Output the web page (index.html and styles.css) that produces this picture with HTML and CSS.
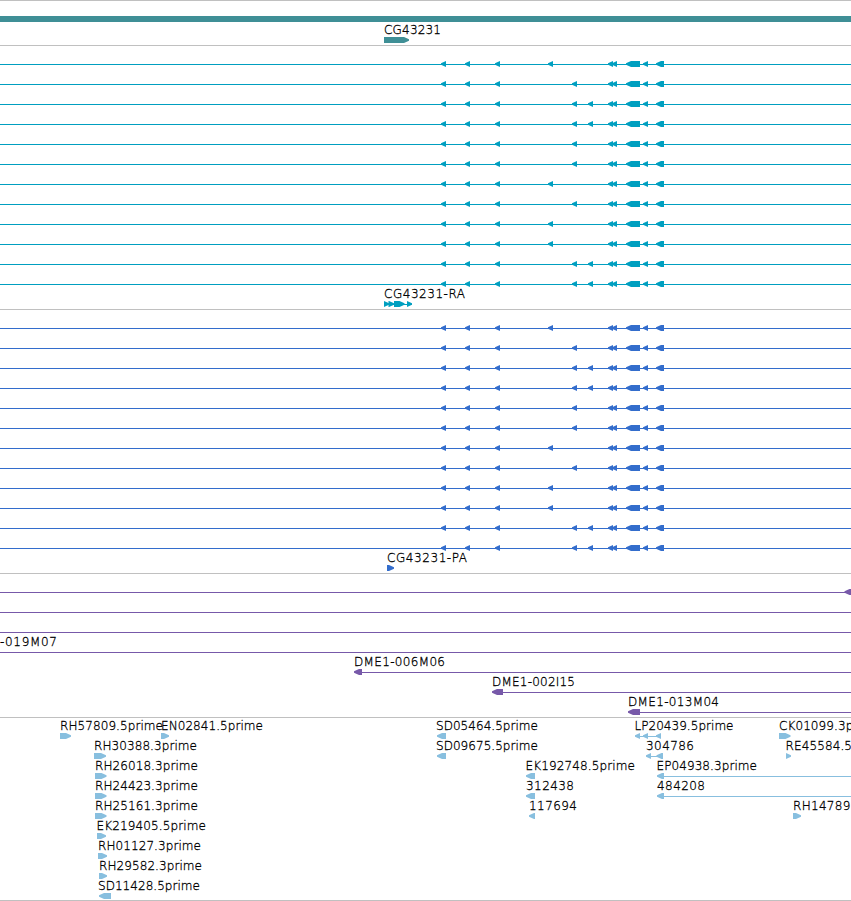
FILE: index.html
```
<!DOCTYPE html>
<html lang="en">
<head>
    <meta charset="UTF-8">
    <meta name="viewport" content="width=device-width, initial-scale=1.0">
    <title>Genome Browser - CG43231</title>
    <link rel="stylesheet" href="styles.css">
</head>
<body>
<main class="browser">
    <section class="track gene" id="gene">
        <div class="span-bar"></div>
    </section>
    <section class="track transcript" id="transcript"></section>
    <section class="track protein" id="protein"></section>
    <section class="track clone" id="clone"></section>
    <section class="track est" id="est"></section>
</main>
<script src="script.js"></script>
</body>
</html>
```
FILE: styles.css
```
* {
    margin: 0;
    padding: 0;
    box-sizing: border-box;
}

body {
    background-color: #fff;
    overflow: hidden;
}

.browser {
    width: 851px;
    overflow: hidden;
    border-bottom: 1px solid #c0c0c0;
}

.track {
    padding: 2px 0 1px;
    border-top: 1px solid #c0c0c0;
}

.gene {
    padding-top: 15px;
    color: #3f8f96;
}

.transcript {
    color: #009fc0;
}

.protein {
    color: #336dcc;
}

.clone {
    color: #7759a9;
}

.est {
    padding-bottom: 0;
    color: #88bfdf;
}

.span-bar {
    height: 6px;
    margin-bottom: 2px;
    background-color: currentColor;
}

.row {
    display: block;
    width: 851px;
    height: 20px;
    overflow: visible;
}

.shape {
    fill: currentColor;
}

.label {
    fill: #000;
    stroke: #000;
    stroke-width: 0.3px;
    font-family: "DejaVu Sans", sans-serif;
    font-size: 12px;
    font-weight: 200;
}
```
FILE: script.js
```
const NS = 'http://www.w3.org/2000/svg';
const WIDTH = 851;

// Exons are [start, end, direction], lines are [start, end], labels are [x, text, width]
const L = -1;
const R = 1;

function add(parent, name, attrs) {
    const el = document.createElementNS(NS, name);
    for (const key in attrs) {
        el.setAttribute(key, attrs[key]);
    }
    parent.appendChild(el);
    return el;
}

// Box with a blunt pointed end, 6px tall
function exonPath(start, end, dir) {
    const tip = Math.min(5, end - start - 0.5);
    if (dir === L) {
        const x = start + 0.5;
        return `M${x} 15.3L${x + tip} 13H${end}V19H${x + tip}L${x} 16.7Z`;
    }
    const x = end - 0.5;
    return `M${x} 15.3L${x - tip} 13H${start}V19H${x - tip}L${x} 16.7Z`;
}

function addRow(trackId, row) {
    const svg = add(document.getElementById(trackId), 'svg', { class: 'row' });
    (row.lines || []).forEach(([start, end]) => {
        add(svg, 'rect', { class: 'shape', x: start, y: 16, width: end - start, height: 1 });
    });
    (row.exons || []).forEach(([start, end, dir]) => {
        add(svg, 'path', { class: 'shape', d: exonPath(start, end, dir) });
    });
    (row.labels || []).forEach(([x, text, width]) => {
        add(svg, 'text', { class: 'label', x: x, y: 10, textLength: width }).textContent = text;
    });
}

// Splice variants: the optional exons in each isoform
const common = [
    [440.5, 446, L], [464.5, 470, L], [494.5, 500, L],
    [607.5, 613, L], [611.5, 617, L], [625.5, 640, L],
    [642.5, 648, L], [655.5, 664, L]
];
const variants = {
    A: [[547.5, 553, L]],
    B: [[571.5, 577, L]],
    C: [[571.5, 577, L], [587.5, 593, L]]
};
const isoforms = 'ABCCBBABAACC'.split('');

addRow('gene', { exons: [[384, 409.5, R]], labels: [[384, 'CG43231', 57]] });

['transcript', 'protein'].forEach(id => {
    isoforms.forEach(key => {
        addRow(id, { lines: [[0, WIDTH]], exons: common.concat(variants[key]) });
    });
});

addRow('transcript', {
    lines: [[384, 412]],
    exons: [[384, 389.5, R], [388.5, 394.5, R], [394, 405, R], [407, 412.5, R]],
    labels: [[384, 'CG43231-RA', 81]]
});
addRow('protein', { exons: [[387, 394.5, R]], labels: [[387, 'CG43231-PA', 80]] });

[
    { lines: [[0, WIDTH]], exons: [[844, 855, L]] },
    { lines: [[0, WIDTH]] },
    { lines: [[0, WIDTH]] },
    { lines: [[0, WIDTH]], labels: [[0, '-019M07', 57]] },
    { lines: [[360, WIDTH]], exons: [[353.5, 362, L]], labels: [[354, 'DME1-006M06', 91]] },
    { lines: [[500, WIDTH]], exons: [[491.5, 503, L]], labels: [[492, 'DME1-002I15', 83]] },
    { lines: [[636, WIDTH]], exons: [[627.5, 640, L]], labels: [[628, 'DME1-013M04', 91]] }
].forEach(row => addRow('clone', row));

[
    {
        lines: [[637, 660]],
        exons: [[60, 71.5, R], [161, 169.5, R], [436.5, 446, L], [634.5, 640, L],
            [642.5, 648, L], [655.5, 661, L], [779, 791, R]],
        labels: [[60, 'RH57809.5prime', 103], [161, 'EN02841.5prime', 102], [436, 'SD05464.5prime', 102],
            [634.5, 'LP20439.5prime', 99], [779, 'CK01099.3prime', 102]]
    },
    {
        lines: [[648, 660]],
        exons: [[94, 106.5, R], [436.5, 446, L], [645.5, 651, L], [656, 663, L], [786, 791.5, R]],
        labels: [[94, 'RH30388.3prime', 103], [436, 'SD09675.5prime', 102], [646, '304786', 48],
            [785.5, 'RE45584.5prime', 102]]
    },
    {
        lines: [[660, WIDTH]],
        exons: [[95, 107, R], [525.5, 535, L], [656.5, 664, L]],
        labels: [[95, 'RH26018.3prime', 103], [525.5, 'EK192748.5prime', 109.5], [656.5, 'EP04938.3prime', 100.5]]
    },
    {
        lines: [[660, WIDTH]],
        exons: [[95, 107, R], [525.5, 535, L], [656.5, 664, L]],
        labels: [[95, 'RH24423.3prime', 103], [526, '312438', 48], [657, '484208', 48]]
    },
    {
        exons: [[95, 107, R], [528.5, 535, L], [793, 801.5, R]],
        labels: [[95, 'RH25161.3prime', 103], [529, '117694', 48], [793, 'RH14789.5prime', 106]]
    },
    { exons: [[97, 106.5, R]], labels: [[96.5, 'EK219405.5prime', 109.5]] },
    { exons: [[98, 107.5, R]], labels: [[98, 'RH01127.3prime', 103]] },
    { exons: [[99, 107.5, R]], labels: [[99, 'RH29582.3prime', 103]] },
    { exons: [[98.5, 111, L]], labels: [[98, 'SD11428.5prime', 102]] }
].forEach(row => addRow('est', row));
```
